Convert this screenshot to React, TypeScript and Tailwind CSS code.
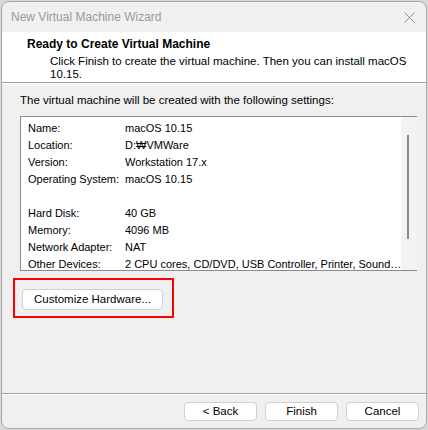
import React from 'react';

const settings = [
  { label: 'Name:', value: 'macOS 10.15' },
  { label: 'Location:', value: 'D:₩VMWare' },
  { label: 'Version:', value: 'Workstation 17.x' },
  { label: 'Operating System:', value: 'macOS 10.15' },
  { label: '', value: '' },
  { label: 'Hard Disk:', value: '40 GB' },
  { label: 'Memory:', value: '4096 MB' },
  { label: 'Network Adapter:', value: 'NAT' },
  { label: 'Other Devices:', value: '2 CPU cores, CD/DVD, USB Controller, Printer, Sound…' },
];

function WinButton({ children, className = '' }: { children: React.ReactNode; className?: string }) {
  return (
    <button
      className={`rounded-[4px] border border-[#d0d0d0] bg-white text-[11.5px] leading-none text-black ${className}`}
    >
      {children}
    </button>
  );
}

export default function App() {
  return (
    <div
      className="w-[428px] h-[430px] bg-[#d9d9d9] pl-px pt-px"
      style={{ fontFamily: '"Liberation Sans", Arial, sans-serif' }}
    >
      <div className="w-[426px] h-[428px] flex flex-col overflow-hidden rounded-[8px] border border-[#a9a9a9] bg-[#f0f0f0]">
        {/* title bar */}
        <div className="h-[30px] flex items-center justify-between pl-[9px] pr-[9px] shrink-0">
          <span className="text-[12px] text-[#9a9a9a]">New Virtual Machine Wizard</span>
          <svg width="11" height="11" viewBox="0 0 11 11" className="mr-[2px]">
            <path d="M0.5 0.5 L10.5 10.5 M10.5 0.5 L0.5 10.5" stroke="#8f8f8f" strokeWidth="1" />
          </svg>
        </div>

        {/* header */}
        <div className="h-[50px] shrink-0 bg-white pl-[25px] pt-[6px] text-[11.5px] leading-[13px] text-black">
          <div className="font-bold text-[12px]">Ready to Create Virtual Machine</div>
          <div className="pl-[23px] pt-[4px]">
            Click Finish to create the virtual machine. Then you can install macOS
            <br />
            10.15.
          </div>
        </div>
        <div className="h-px shrink-0 bg-[#a0a0a0]" />
        <div className="h-px shrink-0 bg-white" />

        {/* body */}
        <div className="flex-1 flex flex-col pl-[18px] pr-[9px]">
          <div className="pt-[9px] text-[11.5px] leading-[14px] text-black">
            The virtual machine will be created with the following settings:
          </div>
          <div className="mt-[9px] h-[155px] flex border border-[#8c8c8c] bg-white">
            <div className="flex-1 pl-[7px] pt-[3px]">
              {settings.map((s, i) => (
                <div key={i} className="flex h-[17px] items-center text-[11px] text-black whitespace-nowrap">
                  <span className="w-[97px] shrink-0">{s.label}</span>
                  <span>{s.value}</span>
                </div>
              ))}
            </div>
            <div className="w-[16px] shrink-0 bg-[#f3f3f3] pt-[18px] flex justify-center">
              <div className="w-[2px] h-[104px] bg-[#8a8a8a] ml-[-2px]" />
            </div>
          </div>

          <div className="mt-[7px] ml-[-7px] w-[161px] h-[40px] border-[2px] border-[#ff0000] pt-[6px] pl-[7px]">
            <WinButton className="w-[141px] h-[21px]">Customize Hardware...</WinButton>
          </div>
          <div className="flex-1" />
        </div>

        <div className="h-px shrink-0 bg-[#a0a0a0]" />
        <div className="h-px shrink-0 bg-white" />
        <div className="h-[33px] shrink-0 flex justify-end gap-[8px] pr-[7px] pt-[7px]">
          <WinButton className="w-[73px] h-[19px]">&lt; Back</WinButton>
          <WinButton className="w-[73px] h-[19px]">Finish</WinButton>
          <WinButton className="w-[73px] h-[19px]">Cancel</WinButton>
        </div>
      </div>
    </div>
  );
}
